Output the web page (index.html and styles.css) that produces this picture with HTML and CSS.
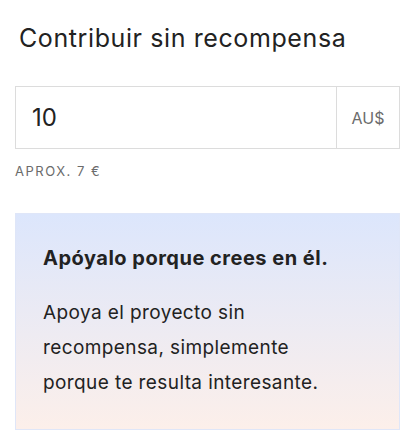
FILE: index.html
```html
<!DOCTYPE html>
<html lang="es">
<head>
  <meta charset="UTF-8">
  <meta name="viewport" content="width=device-width, initial-scale=1.0">
  <title>Contribuir sin recompensa</title>
  <link rel="stylesheet" href="styles.css">
</head>
<body>

<main class="pledge">
  <h2 class="pledge-title">Contribuir sin recompensa</h2>

  <div class="amount">
    <input class="amount-input" type="text" value="10">
    <span class="amount-currency">AU$</span>
  </div>
  <p class="amount-approx">APROX. 7 €</p>

  <!-- Tarjeta informativa -->
  <div class="info-card">
    <h3>Apóyalo porque crees en él.</h3>
    <p>Apoya el proyecto sin recompensa, simplemente porque te resulta interesante.</p>
  </div>
</main>

</body>
</html>
```

FILE: styles.css
```css
* {
  margin: 0;
  padding: 0;
  box-sizing: border-box;
}
body {
  font-family: 'Inter', sans-serif;
  background: #fff;
  color: #1f1f1f;
}
.pledge {
  padding: 22px 19px 0 15px;
}
.pledge-title {
  font-size: 25px;
  font-weight: 400;
  letter-spacing: 0.6px;
  line-height: 32px;
  padding-left: 4px;
  color: #222;
}
.amount {
  display: flex;
  margin-top: 32px;
  height: 63px;
  border: 1px solid #dcdcdc;
}
.amount-input {
  flex: 1;
  min-width: 0;
  border: none;
  outline: none;
  padding-left: 16px;
  font-family: inherit;
  font-size: 24px;
  color: #222;
  background: transparent;
}
.amount-currency {
  width: 63px;
  border-left: 1px solid #dcdcdc;
  display: flex;
  align-items: center;
  justify-content: center;
  font-size: 16px;
  color: #6b6b6b;
}
.amount-approx {
  margin-top: 14px;
  font-size: 13px;
  letter-spacing: 1.5px;
  color: #6b6b6b;
}
.info-card {
  margin-top: 34px;
  padding: 31px 56px 29px 27px;
  border: 1px solid #dfe6f8;
  background: linear-gradient(180deg, #dce6fc, #fcefea);
}
.info-card h3 {
  font-size: 20px;
  font-weight: 700;
  letter-spacing: 0.5px;
  line-height: 26px;
  color: #222;
}
.info-card p {
  margin-top: 24px;
  font-size: 19px;
  letter-spacing: 0.4px;
  line-height: 35px;
  color: #222;
}
```
